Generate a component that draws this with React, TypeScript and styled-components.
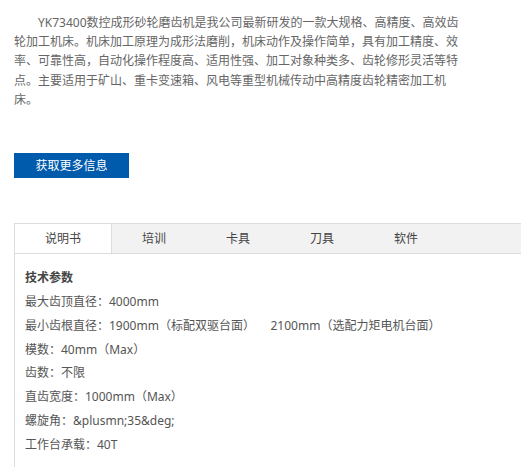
import styled, { createGlobalStyle } from "styled-components";

const GlobalStyle = createGlobalStyle`
  html, body {
    margin: 0;
    padding: 0;
    background: #fff;
    overflow: hidden;
  }
  body {
    font-family: "Noto Sans", "Noto Sans CJK SC", sans-serif;
  }
`;

const Page = styled.div`
  width: 521px;
  padding: 13px 0 0 14px;
  box-sizing: border-box;
  overflow: hidden;
`;

const Intro = styled.p`
  margin: 0;
  width: 446px;
  font-size: 12px;
  line-height: 19.2px;
  color: #666;
  text-indent: 2em;
`;

const MoreButton = styled.button`
  display: block;
  margin-top: 44px;
  width: 115px;
  height: 25px;
  padding: 0;
  border: none;
  background: #005bac;
  color: #fff;
  font-family: inherit;
  font-size: 12px;
  line-height: 25px;
  cursor: pointer;
`;

const TabBox = styled.div`
  margin-top: 45px;
  width: 620px;
  border-left: 1px solid #ddd;
`;

const TabBar = styled.ul`
  display: flex;
  margin: 0;
  padding: 0;
  list-style: none;
  height: 29px;
  background: #f2f2f2;
  border-top: 1px solid #ddd;
  border-bottom: 1px solid #ddd;
`;

const Tab = styled.li<{ $active?: boolean }>`
  padding: 0 30px;
  font-size: 12px;
  line-height: 29px;
  color: #444;
  background: ${(p) => (p.$active ? "#fff" : "transparent")};
  border-right: ${(p) => (p.$active ? "1px solid #ddd" : "none")};
  cursor: pointer;
`;

const Specs = styled.div`
  padding: 12px 10px 10px;
  font-size: 12px;
  line-height: 23.85px;
  color: #555;
`;

const SpecTitle = styled.div`
  font-weight: bold;
  color: #444;
`;

const SpecLine = styled.div`
  white-space: pre;
`;

const tabs = ["说明书", "培训", "卡具", "刀具", "软件"];

const specs = [
  "最大齿顶直径：4000mm",
  "最小齿根直径：1900mm（标配双驱台面）     2100mm（选配力矩电机台面）",
  "模数：40mm（Max）",
  "齿数：不限",
  "直齿宽度：1000mm（Max）",
  "螺旋角：&plusmn;35&deg;",
  "工作台承载：40T",
];

export default function App() {
  return (
    <Page>
      <GlobalStyle />
      <Intro>
        YK73400数控成形砂轮磨齿机是我公司最新研发的一款大规格、高精度、高效齿轮加工机床。机床加工原理为成形法磨削，机床动作及操作简单，具有加工精度、效率、可靠性高，自动化操作程度高、适用性强、加工对象种类多、齿轮修形灵活等特点。主要适用于矿山、重卡变速箱、风电等重型机械传动中高精度齿轮精密加工机床。
      </Intro>
      <MoreButton>获取更多信息</MoreButton>
      <TabBox>
        <TabBar>
          {tabs.map((t, i) => (
            <Tab key={t} $active={i === 0}>
              {t}
            </Tab>
          ))}
        </TabBar>
        <Specs>
          <SpecTitle>技术参数</SpecTitle>
          {specs.map((s) => (
            <SpecLine key={s}>{s}</SpecLine>
          ))}
          <SpecLine>&nbsp;</SpecLine>
        </Specs>
      </TabBox>
    </Page>
  );
}
